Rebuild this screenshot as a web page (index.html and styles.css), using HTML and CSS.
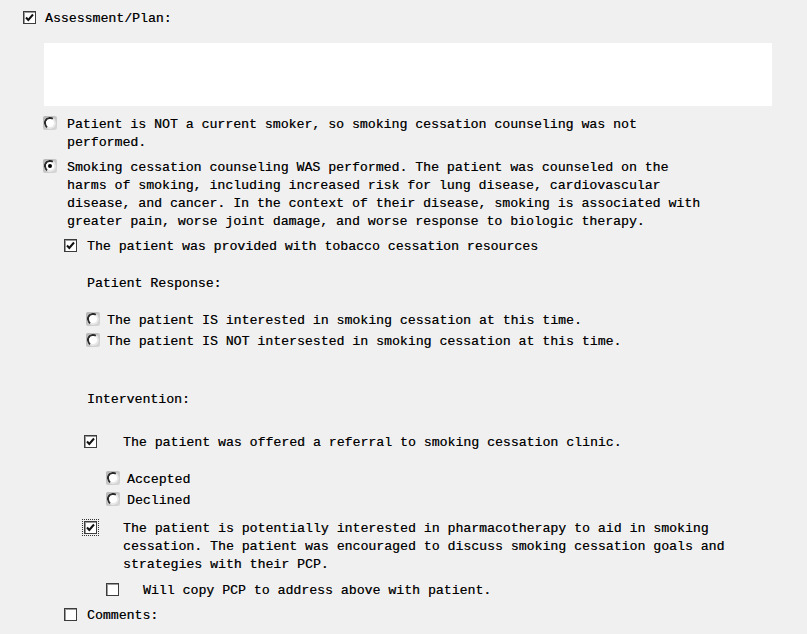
FILE: index.html
```html
<!DOCTYPE html>
<html>
<head>
<meta charset="utf-8">
<link rel="stylesheet" href="styles.css">
</head>
<body>
<div class="page">
  <div class="opt head">
    <span class="cb checked"><svg viewBox="0 0 11 11"><path d="M2 5.5 L4.3 8 L9 2.5" /></svg></span>
    <span class="txt">Assessment/Plan:</span>
  </div>

  <div class="notes"></div>

  <div class="opt r1">
    <span class="rb"></span>
    <span class="txt">Patient is NOT a current smoker, so smoking cessation counseling was not<br>performed.</span>
  </div>

  <div class="opt r2">
    <span class="rb on"></span>
    <span class="txt">Smoking cessation counseling WAS performed. The patient was counseled on the<br>harms of smoking, including increased risk for lung disease, cardiovascular<br>disease, and cancer. In the context of their disease, smoking is associated with<br>greater pain, worse joint damage, and worse response to biologic therapy.</span>
  </div>

  <div class="opt c1">
    <span class="cb checked"><svg viewBox="0 0 11 11"><path d="M2 5.5 L4.3 8 L9 2.5" /></svg></span>
    <span class="txt">The patient was provided with tobacco cessation resources</span>
  </div>

  <div class="label l1">Patient Response:</div>

  <div class="opt r3">
    <span class="rb"></span>
    <span class="txt">The patient IS interested in smoking cessation at this time.</span>
  </div>
  <div class="opt r4">
    <span class="rb"></span>
    <span class="txt">The patient IS NOT intersested in smoking cessation at this time.</span>
  </div>

  <div class="label l2">Intervention:</div>

  <div class="opt c2">
    <span class="cb checked"><svg viewBox="0 0 11 11"><path d="M2 5.5 L4.3 8 L9 2.5" /></svg></span>
    <span class="txt">The patient was offered a referral to smoking cessation clinic.</span>
  </div>

  <div class="opt r5">
    <span class="rb"></span>
    <span class="txt">Accepted</span>
  </div>
  <div class="opt r6">
    <span class="rb"></span>
    <span class="txt">Declined</span>
  </div>

  <div class="opt c3">
    <span class="focus"><span class="cb checked"><svg viewBox="0 0 11 11"><path d="M2 5.5 L4.3 8 L9 2.5" /></svg></span></span>
    <span class="txt">The patient is potentially interested in pharmacotherapy to aid in smoking<br>cessation. The patient was encouraged to discuss smoking cessation goals and<br>strategies with their PCP.</span>
  </div>

  <div class="opt c4">
    <span class="cb"></span>
    <span class="txt">Will copy PCP to address above with patient.</span>
  </div>

  <div class="opt c5">
    <span class="cb"></span>
    <span class="txt">Comments:</span>
  </div>
</div>
</body>
</html>
```

FILE: styles.css
```css
html, body {
  margin: 0;
  padding: 0;
  background: #f0f0f0;
}
body {
  font-family: "Liberation Mono", "Courier New", monospace;
  font-size: 13.2px;
  line-height: 18px;
  color: #000;
}
.page {
  padding-top: 10px;
  width: 807px;
  height: 634px;
  overflow: hidden;
  box-sizing: border-box;
}
.opt {
  display: flex;
  align-items: flex-start;
}
.txt {
  white-space: nowrap;
  text-shadow: 0.35px 0 0 rgba(0,0,0,0.55);
}
.label {
  text-shadow: 0.35px 0 0 rgba(0,0,0,0.55);
}

/* checkbox */
.cb {
  flex: none;
  box-sizing: border-box;
  width: 13px;
  height: 13px;
  margin-top: 1px;
  background: #fff;
  border: 1px solid #3c3c3c;
  box-shadow: inset 1px 1px 0 #9a9a9a;
  display: flex;
  align-items: center;
  justify-content: center;
}
.cb svg {
  width: 11px;
  height: 11px;
}
.cb svg path {
  fill: none;
  stroke: #111;
  stroke-width: 2;
}
.focus {
  flex: none;
  padding: 1px;
  border: 1px dotted #333;
  display: flex;
  margin-top: -1px;
}
.focus .cb {
  margin-top: 0;
}

/* radio */
.rb {
  flex: none;
  position: relative;
  box-sizing: border-box;
  width: 14px;
  height: 14px;
  margin-top: 0;
  background: linear-gradient(135deg, #b4b4b4, #dadada);
  border-radius: 2px;
}
.rb::before {
  content: "";
  position: absolute;
  left: 1px;
  top: 1px;
  width: 12px;
  height: 12px;
  box-sizing: border-box;
  border-radius: 50%;
  background: #fff;
  border: 2px solid;
  border-color: #2a2a2a #e8e8e8 #e8e8e8 #2a2a2a;
  transform: rotate(-10deg);
}
.rb.on::after {
  content: "";
  position: absolute;
  left: 5px;
  top: 5px;
  width: 4px;
  height: 4px;
  border-radius: 50%;
  background: #000;
}

/* rows */
.head { padding-left: 23px; }
.head .cb { margin-right: 9px; }

.notes {
  margin: 15px 0 0 44px;
  width: 728px;
  height: 63px;
  background: #fff;
}

.r1 { margin-top: 10px; padding-left: 43px; }
.r1 .rb, .r2 .rb { margin-right: 10px; }
.r2 { margin-top: 7px; padding-left: 43px; }

.c1 { margin-top: 7px; padding-left: 64px; }
.c1 .cb { margin-right: 10px; }

.label { padding-left: 87px; }
.l1 { margin-top: 19px; }

.r3 { margin-top: 19px; padding-left: 86px; }
.r4 { margin-top: 3px; padding-left: 86px; }
.r3 .rb, .r4 .rb { margin-right: 7px; }

.l2 { margin-top: 40px; }

.c2 { margin-top: 25px; padding-left: 84px; }
.c2 .cb { margin-right: 26px; }

.r5 { margin-top: 19px; padding-left: 106px; }
.r6 { margin-top: 3px; padding-left: 106px; }
.r5 .rb, .r6 .rb { margin-right: 7px; }

.c3 { margin-top: 10px; padding-left: 82px; }
.c3 .focus { margin-right: 24px; }

.c4 { margin-top: 8px; padding-left: 106px; }
.c4 .cb { margin-right: 24px; }

.c5 { margin-top: 7px; padding-left: 64px; }
.c5 .cb { margin-right: 10px; }
```
